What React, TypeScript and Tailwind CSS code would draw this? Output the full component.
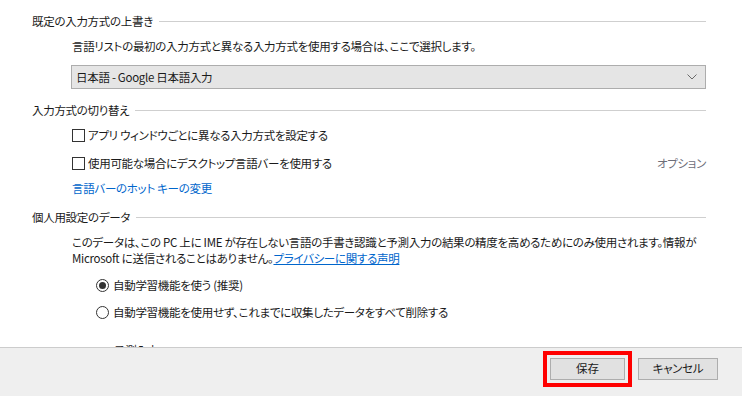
import React from "react";

const font = { fontFamily: '"Noto Sans CJK JP", "Noto Sans", sans-serif' };
const txt = "text-[11.5px] leading-4 tracking-[-0.3px] text-[#1a1a1a] whitespace-nowrap [font-feature-settings:'palt']";

function Heading({ text }: { text: string }) {
  return (
    <div className="flex h-4 items-center">
      <span className={txt}>{text}</span>
      <div className="ml-[6px] h-px flex-1 bg-[#cfcfcf]" />
    </div>
  );
}

function Checkbox({ label }: { label: string }) {
  return (
    <div className="flex h-4 items-center pl-[40px]">
      <div className="h-[13px] w-[13px] border border-[#333333] bg-white" />
      <span className={"ml-[3px] " + txt}>{label}</span>
    </div>
  );
}

function Radio({ label, checked }: { label: string; checked?: boolean }) {
  return (
    <div className="flex h-4 items-center pl-[64px]">
      <div className="flex h-[13px] w-[13px] items-center justify-center rounded-full border border-[#333333] bg-white">
        {checked && <div className="h-[7px] w-[7px] rounded-full bg-[#333333]" />}
      </div>
      <span className={"ml-[4px] " + txt}>{label}</span>
    </div>
  );
}

export default function App() {
  return (
    <div className="flex h-[396px] w-[742px] flex-col bg-white" style={font}>
      <div className="h-[347px] overflow-hidden pl-8 pr-9 pt-[13px]">
        <Heading text="既定の入力方式の上書き" />
        <div className={"mt-[9px] pl-[40px] " + txt}>
          言語リストの最初の入力方式と異なる入力方式を使用する場合は、ここで選択します。
        </div>
        <div className="ml-[39px] mt-[11px] flex h-[24px] items-center justify-between border border-[#adadad] bg-[#e5e5e5] pl-[4px] pr-[8px]">
          <span className={txt}>日本語 - Google 日本語入力</span>
          <svg width="10" height="6" viewBox="0 0 10 6">
            <path d="M0.5 0.5 L5 5 L9.5 0.5" fill="none" stroke="#6a6a6a" strokeWidth="1" />
          </svg>
        </div>
        <div className="mt-[13px]">
          <Heading text="入力方式の切り替え" />
        </div>
        <div className="mt-[9px]">
          <Checkbox label="アプリ ウィンドウごとに異なる入力方式を設定する" />
        </div>
        <div className="mt-[12px] flex items-center justify-between">
          <Checkbox label="使用可能な場合にデスクトップ言語バーを使用する" />
          <span className="text-[11.5px] leading-4 tracking-[-0.3px] text-[#6d6d78] whitespace-nowrap [font-feature-settings:'palt']">オプション</span>
        </div>
        <div className="mt-[9px] pl-[40px] text-[11.5px] leading-4 tracking-[-0.3px] text-[#0066cc] whitespace-nowrap [font-feature-settings:'palt']">
          言語バーのホット キーの変更
        </div>
        <div className="mt-[13px]">
          <Heading text="個人用設定のデータ" />
        </div>
        <div className={"mt-[9px] pl-[40px] " + txt}>
          <div>このデータは、この PC 上に IME が存在しない言語の手書き認識と予測入力の結果の精度を高めるためにのみ使用されます。情報が</div>
          <div>
            Microsoft に送信されることはありません。
            <span className="text-[#0066cc] underline">プライバシーに関する声明</span>
          </div>
        </div>
        <div className="mt-[11px]">
          <Radio label="自動学習機能を使う (推奨)" checked />
        </div>
        <div className="mt-[11px]">
          <Radio label="自動学習機能を使用せず、これまでに収集したデータをすべて削除する" />
        </div>
        <div className={"mt-[22px] pl-[82px] " + txt}>予測入力</div>
      </div>
      <div className="flex h-[49px] items-start justify-end border-t border-[#cccccc] bg-[#efefef] pr-6 pt-[3px]">
        <div className="border-4 border-[#ff0000] p-[3px]">
          <div className="flex h-[22px] w-[75px] items-center justify-center border border-[#adadad] bg-[#e1e1e1] text-[11.5px] text-[#1a1a1a]">
            保存
          </div>
        </div>
        <div className="ml-[6px] mt-[7px] flex h-[22px] w-[80px] items-center justify-center border border-[#adadad] bg-[#e1e1e1] text-[11.5px] tracking-[-0.3px] text-[#1a1a1a] [font-feature-settings:'palt']">
          キャンセル
        </div>
      </div>
    </div>
  );
}
